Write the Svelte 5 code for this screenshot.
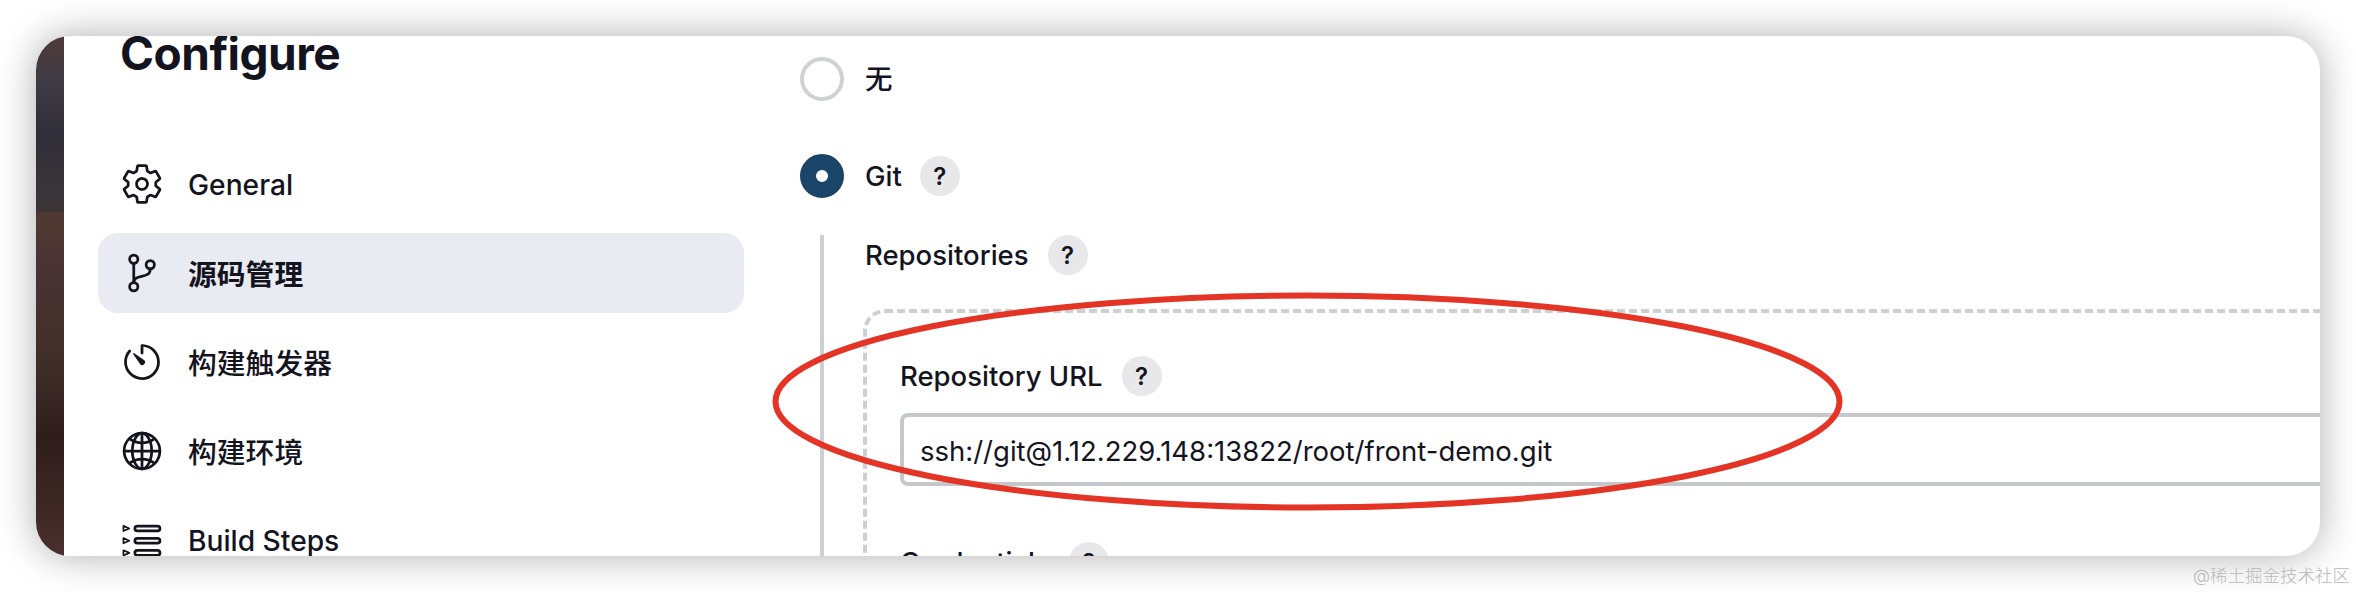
<script lang="ts">
    const navItems = [
        { id: "general", label: "General" },
        { id: "scm", label: "源码管理", active: true, cjk: true },
        { id: "triggers", label: "构建触发器", cjk: true },
        { id: "env", label: "构建环境", cjk: true },
        { id: "steps", label: "Build Steps" }
    ];
</script>

<div class="page">
    <div class="card">
        <div class="photo"></div>

        <aside class="sidebar">
            <h1>Configure</h1>
            <nav>
                {#each navItems as item}
                    <div class="nav-item" class:active={item.active}>
                        <svg class="nav-icon" viewBox="0 0 512 512" fill="none" stroke="currentColor" stroke-width="32" stroke-linecap="round" stroke-linejoin="round">
                            {#if item.id === "general"}
                                <path d="M262.29 192.31a64 64 0 1057.4 57.4 64.13 64.13 0 00-57.4-57.4zM416.39 256a154.34 154.34 0 01-1.53 20.79l45.21 35.46a10.81 10.81 0 012.45 13.75l-42.77 74a10.81 10.81 0 01-13.14 4.59l-44.9-18.08a16.11 16.11 0 00-15.17 1.75A164.48 164.48 0 01325 400.8a15.94 15.94 0 00-8.82 12.14l-6.73 47.89a11.08 11.08 0 01-10.68 9.17h-85.54a11.11 11.11 0 01-10.69-8.87l-6.72-47.82a16.07 16.07 0 00-9-12.22 155.3 155.3 0 01-21.46-12.57 16 16 0 00-15.11-1.71l-44.89 18.07a10.81 10.81 0 01-13.14-4.58l-42.77-74a10.8 10.8 0 012.45-13.75l38.21-30a16.05 16.05 0 006-14.08c-.36-4.17-.58-8.33-.58-12.5s.21-8.27.58-12.35a16 16 0 00-6.07-13.94l-38.19-30A10.81 10.81 0 0149.48 186l42.77-74a10.81 10.81 0 0113.14-4.59l44.9 18.08a16.11 16.11 0 0015.17-1.75A164.48 164.48 0 01187 111.2a15.94 15.94 0 008.82-12.14l6.73-47.89A11.08 11.08 0 01213.23 42h85.54a11.11 11.11 0 0110.69 8.87l6.72 47.82a16.07 16.07 0 009 12.22 155.3 155.3 0 0121.46 12.57 16 16 0 0015.11 1.71l44.89-18.07a10.81 10.81 0 0113.14 4.58l42.77 74a10.8 10.8 0 01-2.45 13.75l-38.21 30a16.05 16.05 0 00-6.05 14.08c.33 4.14.55 8.3.55 12.47z"></path>
                            {:else if item.id === "scm"}
                                <circle cx="160" cy="96" r="48"></circle>
                                <circle cx="160" cy="416" r="48"></circle>
                                <path d="M160 368V144"></path>
                                <circle cx="352" cy="160" r="48"></circle>
                                <path d="M352 208c0 128-192 48-192 160"></path>
                            {:else if item.id === "triggers"}
                                <path d="M112.91 128A191.85 191.85 0 0064 254c-1.18 106.35 85.65 193.8 192 194 106.2.2 192-85.83 192-192 0-104.54-83.55-189.61-187.5-192a4.36 4.36 0 00-4.5 4.37V152"></path>
                                <path fill="currentColor" stroke="none" d="M233.38 278.63l-79-113a8.13 8.13 0 0111.32-11.32l113 79a32.5 32.5 0 01-37 53.34 33.21 33.21 0 01-8.32-8.02z"></path>
                            {:else if item.id === "env"}
                                <path d="M256 48C141.13 48 48 141.13 48 256s93.13 208 208 208 208-93.13 208-208S370.87 48 256 48z"></path>
                                <path d="M256 48c-58.07 0-112.67 92.43-112.67 208S197.93 464 256 464s112.67-92.43 112.67-208S314.07 48 256 48z"></path>
                                <path d="M117.33 117.33c38.24 27.15 86.38 43.34 138.67 43.34s100.43-16.19 138.67-43.34M394.67 394.67c-38.24-27.15-86.38-43.34-138.67-43.34s-100.43 16.19-138.67 43.34"></path>
                                <path d="M256 48v416M464 256H48"></path>
                            {:else}
                                <rect x="173" y="94" width="292" height="56" rx="28"></rect>
                                <rect x="173" y="236" width="292" height="56" rx="28"></rect>
                                <rect x="173" y="378" width="292" height="56" rx="28"></rect>
                                <path stroke-width="20" d="M40 92l68 30-68 30zM40 234l68 30-68 30zM40 376l68 30-68 30z"></path>
                            {/if}
                        </svg>
                        <span class={item.cjk ? "nav-cjk" : "nav-latin"}>{item.label}</span>
                    </div>
                {/each}
            </nav>
        </aside>

        <main class="content">
            <div class="radio-row">
                <span class="radio"></span>
                <span class="cjk-label">无</span>
            </div>
            <div class="radio-row git">
                <span class="radio checked"></span>
                <span>Git</span>
                <span class="help">?</span>
            </div>

            <section class="git-options">
                <div class="label-row">
                    <span>Repositories</span>
                    <span class="help">?</span>
                </div>
                <div class="repo-box">
                    <svg class="dashes" viewBox="0 0 1570 400" aria-hidden="true">
                        <rect x="2" y="2" width="1566" height="396" rx="20" fill="none" stroke="#cdd0d3" stroke-width="4" stroke-dasharray="8 4"></rect>
                    </svg>
                    <div class="label-row">
                        <span>Repository URL</span>
                        <span class="help">?</span>
                    </div>
                    <input class="url-input" type="text" readonly value="ssh://git@1.12.229.148:13822/root/front-demo.git" />
                    <div class="label-row credentials">
                        <span>Credentials</span>
                        <span class="help">?</span>
                    </div>
                </div>
            </section>
        </main>

        <svg class="mark" viewBox="0 0 2284 520" aria-hidden="true">
            <ellipse cx="1271.5" cy="365.5" rx="532" ry="106" fill="none" stroke="#e33425" stroke-width="6"></ellipse>
        </svg>
    </div>
    <div class="watermark">@稀土掘金技术社区</div>
</div>

<style>
    :global(body) {
        margin: 0;
        background: #fff;
    }

    .page {
        position: relative;
        height: 592px;
        padding: 36px;
        box-sizing: border-box;
        overflow: hidden;
        font-family: Inter, "Noto Sans CJK SC", sans-serif;
        color: #14141f;
    }

    .card {
        position: relative;
        display: flex;
        height: 520px;
        background: #fff;
        border-radius: 34px;
        overflow: hidden;
        box-shadow: 0 0 38px rgba(0, 0, 0, 0.32);
    }

    .photo {
        flex: 0 0 28px;
        background: linear-gradient(
            to bottom,
            #4f3a3a 0,
            #3f3b44 45px,
            #302e38 100px,
            #3a3538 160px,
            #3a3335 175px,
            #523a33 178px,
            #4a3234 230px,
            #43302a 310px,
            #3a2925 350px,
            #2f1e1c 400px,
            #3c2624 465px,
            #4a302f 520px
        );
    }

    .sidebar {
        flex: 0 0 680px;
        box-sizing: border-box;
        padding-left: 34px;
    }

    h1 {
        margin: -10px 0 0 22px;
        font-size: 46px;
        line-height: 54px;
        font-weight: 700;
        letter-spacing: -0.5px;
    }

    nav {
        display: flex;
        flex-direction: column;
        gap: 9px;
        margin-top: 64px;
    }

    .nav-item {
        display: flex;
        align-items: center;
        gap: 24px;
        height: 80px;
        padding-left: 22px;
        border-radius: 20px;
        font-size: 28.2px;
        font-weight: 500;
    }

    .nav-item.active {
        background: #e9ebf3;
        font-weight: 600;
    }

    .nav-latin {
        padding-top: 2px;
    }

    .nav-cjk {
        padding-bottom: 2px;
        font-size: 28.8px;
    }

    .nav-icon {
        flex: 0 0 44px;
        width: 44px;
        height: 44px;
    }

    .content {
        flex: none;
        width: 1700px;
        padding: 21px 0 0 56px;
        font-size: 27.5px;
        font-weight: 500;
    }

    .radio-row {
        display: flex;
        align-items: center;
        gap: 21px;
        height: 44px;
    }

    .radio-row.git {
        margin-top: 53px;
    }

    .radio-row .help {
        margin-left: -3px;
    }

    .cjk-label {
        padding-bottom: 5px;
    }

    .radio {
        box-sizing: border-box;
        width: 44px;
        height: 44px;
        border: 4px solid #cfd1d3;
        border-radius: 50%;
        background: #fff;
    }

    .radio.checked {
        border: 16px solid #1a4568;
    }

    .help {
        display: flex;
        align-items: center;
        justify-content: center;
        width: 40px;
        height: 40px;
        border-radius: 50%;
        background: #e8e8ea;
        font-size: 24px;
        font-weight: 600;
    }

    .git-options {
        margin: 37px 0 0 20px;
        padding-left: 41px;
        border-left: 4px solid #cdd0d3;
        height: 340px;
    }

    .label-row {
        display: flex;
        align-items: center;
        gap: 19px;
        height: 40px;
    }

    .repo-box {
        position: relative;
        box-sizing: border-box;
        width: 1570px;
        height: 400px;
        margin: 34px 0 0 -2px;
        padding: 47px 4px 0 37px;
    }

    .dashes {
        position: absolute;
        inset: 0;
        width: 1570px;
        height: 400px;
    }

    .url-input {
        position: relative;
        display: block;
        box-sizing: border-box;
        width: 100%;
        height: 73px;
        margin: 17px 0 56px;
        padding: 2px 16px 0;
        border: 4px solid #c5c8cb;
        border-radius: 8px;
        outline: none;
        background: #fff;
        color: inherit;
        font: inherit;
        font-weight: 400;
    }

    .watermark {
        position: absolute;
        top: 565px;
        right: 6px;
        font-size: 17.5px;
        line-height: 22px;
        color: #b8b8b8;
        font-weight: 300;
    }

    .mark {
        position: absolute;
        inset: 0;
        width: 2284px;
        height: 520px;
        pointer-events: none;
    }
</style>
